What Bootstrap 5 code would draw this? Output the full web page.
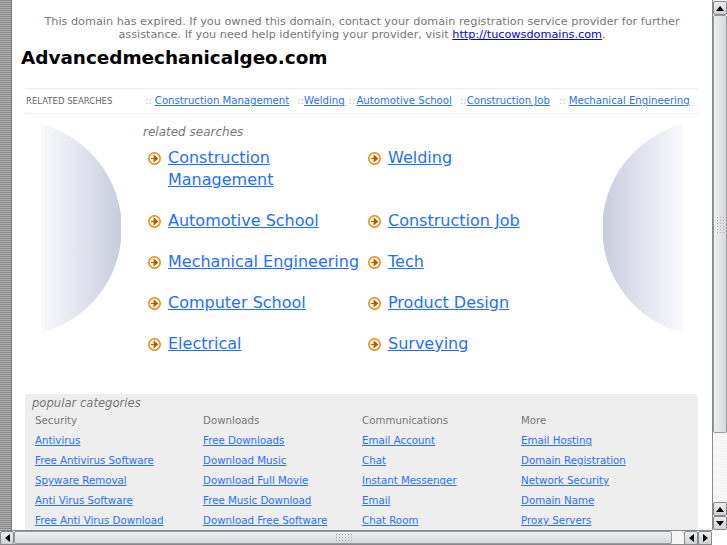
<!DOCTYPE html>
<html lang="en">
<head>
    <meta charset="UTF-8">
    <title>Advancedmechanicalgeo.com</title>
    <link href="https://cdn.jsdelivr.net/npm/bootstrap@5.3.3/dist/css/bootstrap.min.css" rel="stylesheet">
    <style>
        html, body { height: 100%; overflow: hidden; }
        body { font-family: "DejaVu Sans", sans-serif; background: #fff; }
        .win-shell { height: 545px; width: 727px; }
        .win-edge { width: 12px; background: repeating-linear-gradient(180deg, #8c8c8c 0 1px, #ababab 1px 2px); border-right: 1px solid #777; }
        .page-area { width: 700px; padding-top: 15px; }
        .expired-note { font-size: 11.25px; line-height: 13px; color: #777; width: 680px; margin: 0 auto; }
        .expired-note a { color: #0000ee; }
        .site-title { font-size: 18.4px; line-height: 22px; font-weight: 700; color: #000; margin: 6px 0 0 9px; }
        .search-strip { margin: 19px 14px 0 13px; height: 26px; border-top: 1px solid #eee; border-bottom: 1px solid #eee; font-size: 10.15px; }
        .search-strip .strip-label { width: 120px; padding-left: 1px; font-size: 8.5px; color: #666; }
        .search-strip a, .cat-col a { color: #2a6fff; }
        .strip-sep { color: #bbb; margin-left: 7px; }
        .search-strip .strip-label + .strip-sep { margin-left: 0; margin-right: 3px; }
        .search-strip .sep-wide { margin-left: 9px; margin-right: 3px; }
        .search-strip .sep-tight { margin-left: 4px; margin-right: 1px; }
        .search-strip .sep-mid { margin-left: 8px; }
        .results-wrap { margin: 10px 29px 0 29px; }
        .side-disc { width: 80px; height: 209px; flex: none; }
        .results-mid { width: 440px; margin-left: 22px; padding-top: 1px; }
        .results-head { font-size: 12px; line-height: 14px; font-style: italic; color: #777; }
        .result-grid { display: grid; grid-template-columns: 220px 220px; row-gap: 19px; margin: 8px 0 0 5px; font-size: 16px; line-height: 22px; }
        .result-item { gap: 7px; }
        .result-item a { color: #1f6fff; }
        .result-item svg { flex: none; margin-top: 5px; }
        .cat-panel { margin: 39px 14px 0 13px; background: #eee; border-radius: 3px; padding: 2px 7px 3px; }
        .cat-title { font-size: 11.6px; line-height: 14px; font-style: italic; color: #777; }
        .cat-cols { display: grid; grid-template-columns: 168px 159px 159px 150px; margin: 4px 0 0 3px; font-size: 10.25px; }
        .cat-col div { height: 20px; line-height: 13px; white-space: nowrap; }
        .cat-head { color: #777; }
        .vbar { width: 15px; background: #fff; border-left: 1px solid #888; padding: 1px 0 0 0; background-image: repeating-conic-gradient(#eee 0 25%, #fff 0 50%); background-size: 2px 2px; }
        .hbar { height: 15px; }
        .hbar-main { background-image: repeating-conic-gradient(#eee 0 25%, #fff 0 50%); background-size: 2px 2px; width: 712px; border-top: 1px solid #888; border-bottom: 1px solid #888; }
        .bar-btn { width: 14px; height: 14px; flex: none; background: linear-gradient(180deg, #eceef0, #cfd1d5); border: 1px solid #888; border-radius: 2px; }
        .vthumb { height: 418px; background: linear-gradient(90deg, #eef0f3, #d6d8dc); border: 1px solid #999; border-radius: 2px; }
        .hthumb { flex: 0 0 658px; background: linear-gradient(180deg, #eef0f3, #d6d8dc); border: 1px solid #999; border-radius: 2px; }
        .grip { width: 17px; height: 9px; background-image: radial-gradient(#aaa 0 1px, transparent 1px); background-size: 3px 3px; }
        .grip-v { width: 9px; height: 17px; }
    </style>
</head>
<body>
    <div class="win-shell d-flex flex-column overflow-hidden">
        <div class="d-flex flex-grow-1 overflow-hidden">
            <div class="win-edge"></div>
            <div class="page-area overflow-hidden">
                <p class="expired-note text-center mb-0">This domain has expired. If you owned this domain, contact your domain registration service provider for further assistance. If you need help identifying your provider, visit <a href="#">http://tucowsdomains.com</a>.</p>
                <h1 class="site-title">Advancedmechanicalgeo.com</h1>
                <div class="search-strip d-flex align-items-center text-nowrap">
                    <div class="strip-label">RELATED SEARCHES</div>
                    <span class="strip-sep">::</span><a href="#">Construction Management</a>
                    <span class="strip-sep sep-mid">::</span><a href="#">Welding</a>
                    <span class="strip-sep sep-tight">::</span><a href="#">Automotive School</a>
                    <span class="strip-sep sep-mid">::</span><a href="#">Construction Job</a>
                    <span class="strip-sep sep-wide">::</span><a href="#">Mechanical Engineering</a>
                </div>
                <div class="results-wrap d-flex align-items-start">
                    <svg class="side-disc" viewBox="0 0 80 209"><defs><linearGradient id="discL"><stop offset="0" stop-color="#fafafd"/><stop offset="1" stop-color="#c8cddc"/></linearGradient><linearGradient id="discR"><stop offset="0" stop-color="#c8cddc"/><stop offset="1" stop-color="#fafafd"/></linearGradient></defs><path d="M0 0A108 108 0 0 1 0 209Z" fill="url(#discL)"/></svg>
                    <div class="results-mid">
                        <div class="results-head">related searches</div>
                        <div class="result-grid">
                            <div class="result-item d-flex"><svg width="13" height="13" viewBox="0 0 13 13"><circle cx="6.5" cy="6.5" r="5.7" fill="#fff3dc" stroke="#e58a14" stroke-width="1.5"/><path d="M3 6.5h4.5M6.2 3.8l3.2 2.7-3.2 2.7z" fill="#a4600c" stroke="#a4600c" stroke-width="1.2"/></svg><a href="#">Construction Management</a></div>
                            <div class="result-item d-flex"><svg width="13" height="13" viewBox="0 0 13 13"><circle cx="6.5" cy="6.5" r="5.7" fill="#fff3dc" stroke="#e58a14" stroke-width="1.5"/><path d="M3 6.5h4.5M6.2 3.8l3.2 2.7-3.2 2.7z" fill="#a4600c" stroke="#a4600c" stroke-width="1.2"/></svg><a href="#">Welding</a></div>
                            <div class="result-item d-flex"><svg width="13" height="13" viewBox="0 0 13 13"><circle cx="6.5" cy="6.5" r="5.7" fill="#fff3dc" stroke="#e58a14" stroke-width="1.5"/><path d="M3 6.5h4.5M6.2 3.8l3.2 2.7-3.2 2.7z" fill="#a4600c" stroke="#a4600c" stroke-width="1.2"/></svg><a href="#">Automotive School</a></div>
                            <div class="result-item d-flex"><svg width="13" height="13" viewBox="0 0 13 13"><circle cx="6.5" cy="6.5" r="5.7" fill="#fff3dc" stroke="#e58a14" stroke-width="1.5"/><path d="M3 6.5h4.5M6.2 3.8l3.2 2.7-3.2 2.7z" fill="#a4600c" stroke="#a4600c" stroke-width="1.2"/></svg><a href="#">Construction Job</a></div>
                            <div class="result-item d-flex text-nowrap"><svg width="13" height="13" viewBox="0 0 13 13"><circle cx="6.5" cy="6.5" r="5.7" fill="#fff3dc" stroke="#e58a14" stroke-width="1.5"/><path d="M3 6.5h4.5M6.2 3.8l3.2 2.7-3.2 2.7z" fill="#a4600c" stroke="#a4600c" stroke-width="1.2"/></svg><a href="#">Mechanical Engineering</a></div>
                            <div class="result-item d-flex"><svg width="13" height="13" viewBox="0 0 13 13"><circle cx="6.5" cy="6.5" r="5.7" fill="#fff3dc" stroke="#e58a14" stroke-width="1.5"/><path d="M3 6.5h4.5M6.2 3.8l3.2 2.7-3.2 2.7z" fill="#a4600c" stroke="#a4600c" stroke-width="1.2"/></svg><a href="#">Tech</a></div>
                            <div class="result-item d-flex"><svg width="13" height="13" viewBox="0 0 13 13"><circle cx="6.5" cy="6.5" r="5.7" fill="#fff3dc" stroke="#e58a14" stroke-width="1.5"/><path d="M3 6.5h4.5M6.2 3.8l3.2 2.7-3.2 2.7z" fill="#a4600c" stroke="#a4600c" stroke-width="1.2"/></svg><a href="#">Computer School</a></div>
                            <div class="result-item d-flex"><svg width="13" height="13" viewBox="0 0 13 13"><circle cx="6.5" cy="6.5" r="5.7" fill="#fff3dc" stroke="#e58a14" stroke-width="1.5"/><path d="M3 6.5h4.5M6.2 3.8l3.2 2.7-3.2 2.7z" fill="#a4600c" stroke="#a4600c" stroke-width="1.2"/></svg><a href="#">Product Design</a></div>
                            <div class="result-item d-flex"><svg width="13" height="13" viewBox="0 0 13 13"><circle cx="6.5" cy="6.5" r="5.7" fill="#fff3dc" stroke="#e58a14" stroke-width="1.5"/><path d="M3 6.5h4.5M6.2 3.8l3.2 2.7-3.2 2.7z" fill="#a4600c" stroke="#a4600c" stroke-width="1.2"/></svg><a href="#">Electrical</a></div>
                            <div class="result-item d-flex"><svg width="13" height="13" viewBox="0 0 13 13"><circle cx="6.5" cy="6.5" r="5.7" fill="#fff3dc" stroke="#e58a14" stroke-width="1.5"/><path d="M3 6.5h4.5M6.2 3.8l3.2 2.7-3.2 2.7z" fill="#a4600c" stroke="#a4600c" stroke-width="1.2"/></svg><a href="#">Surveying</a></div>
                        </div>
                    </div>
                    <svg class="side-disc ms-auto" viewBox="0 0 80 209"><path d="M80 0A108 108 0 0 0 80 209Z" fill="url(#discR)"/></svg>
                </div>
                <div class="cat-panel">
                    <div class="cat-title">popular categories</div>
                    <div class="cat-cols">
                        <div class="cat-col"><div class="cat-head">Security</div><div><a href="#">Antivirus</a></div><div><a href="#">Free Antivirus Software</a></div><div><a href="#">Spyware Removal</a></div><div><a href="#">Anti Virus Software</a></div><div><a href="#">Free Anti Virus Download</a></div></div>
                        <div class="cat-col"><div class="cat-head">Downloads</div><div><a href="#">Free Downloads</a></div><div><a href="#">Download Music</a></div><div><a href="#">Download Full Movie</a></div><div><a href="#">Free Music Download</a></div><div><a href="#">Download Free Software</a></div></div>
                        <div class="cat-col"><div class="cat-head">Communications</div><div><a href="#">Email Account</a></div><div><a href="#">Chat</a></div><div><a href="#">Instant Messenger</a></div><div><a href="#">Email</a></div><div><a href="#">Chat Room</a></div></div>
                        <div class="cat-col"><div class="cat-head">More</div><div><a href="#">Email Hosting</a></div><div><a href="#">Domain Registration</a></div><div><a href="#">Network Security</a></div><div><a href="#">Domain Name</a></div><div><a href="#">Proxy Servers</a></div></div>
                    </div>
                </div>
            </div>
            <div class="vbar d-flex flex-column">
                <div class="bar-btn d-flex align-items-center justify-content-center"><svg width="8" height="5"><path d="M4 0l4 5H0z"/></svg></div>
                <div class="vthumb d-flex align-items-center justify-content-center"><div class="grip grip-v"></div></div>
                <div class="flex-grow-1"></div>
                <div class="bar-btn d-flex align-items-center justify-content-center"><svg width="8" height="5"><path d="M4 0l4 5H0z"/></svg></div>
                <div class="bar-btn d-flex align-items-center justify-content-center"><svg width="8" height="5"><path d="M4 5l4-5H0z"/></svg></div>
            </div>
        </div>
        <div class="hbar d-flex">
            <div class="hbar-main d-flex">
                <div class="bar-btn d-flex align-items-center justify-content-center"><svg width="5" height="8"><path d="M0 4l5-4v8z"/></svg></div>
                <div class="hthumb d-flex align-items-center justify-content-center"><div class="grip"></div></div>
                <div class="flex-grow-1"></div>
                <div class="bar-btn d-flex align-items-center justify-content-center"><svg width="5" height="8"><path d="M0 4l5-4v8z"/></svg></div>
                <div class="bar-btn d-flex align-items-center justify-content-center"><svg width="5" height="8"><path d="M5 4L0 0v8z"/></svg></div>
            </div>
        </div>
    </div>
    <script src="https://cdn.jsdelivr.net/npm/bootstrap@5.3.3/dist/js/bootstrap.bundle.min.js"></script>
</body>
</html>
